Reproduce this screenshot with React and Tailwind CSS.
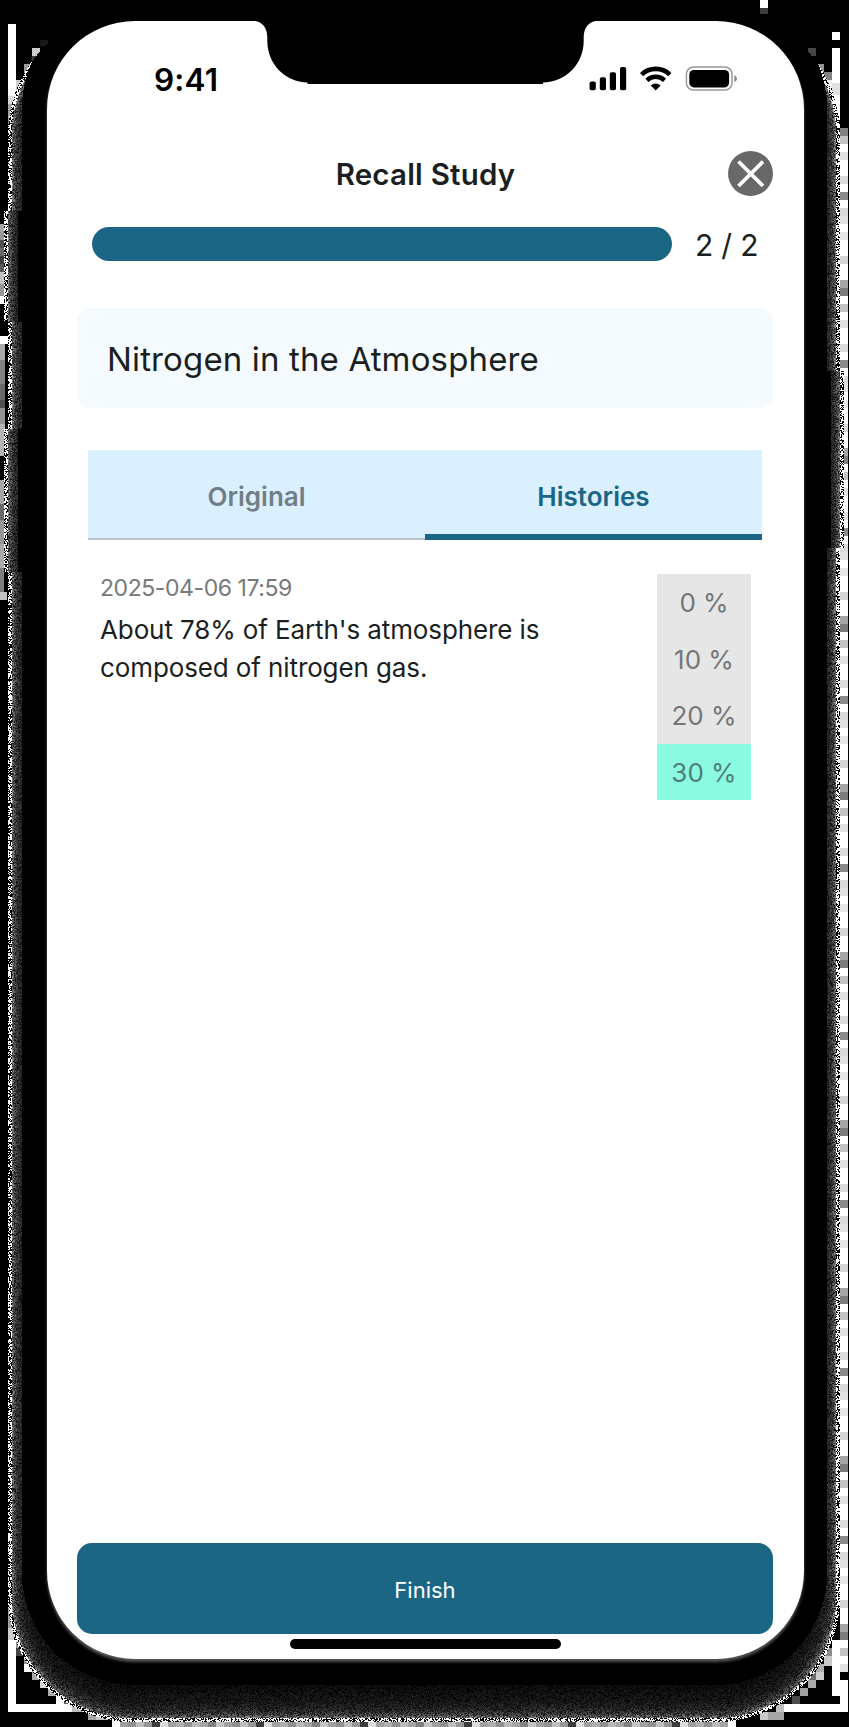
import React from "react";

// Smallest signed distance inside a rounded rectangle (positive = inside).
function inset(px, py, x0, y0, x1, y1, r) {
  const cx = (x0 + x1) / 2;
  const cy = (y0 + y1) / 2;
  const qx = Math.abs(px - cx) - (x1 - x0) / 2 + r;
  const qy = Math.abs(py - cy) - (y1 - y0) / 2 + r;
  const out = Math.hypot(Math.max(qx, 0), Math.max(qy, 0));
  return r - out - Math.min(Math.max(qx, qy), 0);
}

// Dithered drop shadow around the phone body, grouped by grey level.
function buildShadow() {
  let seed = 20250406;
  const rand = () => {
    seed = (Math.imul(seed, 1664525) + 1013904223) >>> 0;
    return seed / 4294967296;
  };
  const levels = {};
  for (let y = 40; y < 1723; y++) {
    const leftButton = (y > 210 && y < 322) || (y > 428 && y < 572);
    const rightButton = y > 370 && y < 548;
    for (let x = 4; x < 846; x++) {
      if (x > 140 && x < 708 && y < 1684) {
        x = 708;
        continue;
      }
      const sx = x < 420 && leftButton ? x + 4 : x > 420 && rightButton ? x - 4 : x;
      if (inset(sx + 0.5, y + 0.5, 22, -4, 827, 1685, 112) > 0) continue;
      const d = inset(sx + 0.5, y + 0.5, 8, 10, 840, 1722, 125);
      if (d <= 0) continue;
      let v;
      if (d < 3.6) v = rand() < 0.55 ? 255 : 0;
      else v = Math.min(255, (440 / d) * (0.25 + 1.5 * rand()));
      v = Math.round(v / 15) * 15;
      if (v < 8) {
        if (d < 3.6) v = 0;
        else continue;
      }
      levels[v] = (levels[v] || "") + `M${x} ${y}h1v1h-1z`;
    }
  }
  return Object.entries(levels);
}

const SHADOW = buildShadow();

// x, y, width, height, grey level
const BLOCKS = [
  [8, 24, 8, 72, 255], [8, 96, 8, 8, 215], [8, 104, 8, 16, 165], [8, 120, 4, 20, 130],
  [16, 80, 8, 16, 205], [24, 64, 8, 10, 155], [24, 74, 6, 6, 70], [32, 48, 8, 8, 205], [32, 56, 6, 8, 60], [40, 40, 8, 6, 25],
  [0, 224, 8, 8, 165], [0, 232, 6, 8, 150], [0, 240, 5, 8, 80], [0, 248, 5, 8, 105], [0, 256, 5, 8, 60], [0, 264, 5, 8, 90],
  [0, 272, 5, 12, 195], [0, 284, 5, 12, 150], [0, 296, 8, 8, 255], [0, 336, 8, 8, 255],
  [0, 344, 5, 16, 170], [0, 360, 5, 24, 130], [0, 384, 5, 16, 105], [0, 400, 5, 8, 80], [0, 408, 5, 16, 145], [0, 424, 5, 32, 180],
  [0, 480, 5, 24, 165], [0, 504, 5, 16, 105], [0, 520, 5, 24, 150], [0, 544, 5, 24, 170], [0, 568, 4, 24, 125], [0, 592, 7, 8, 195],
  [760, 0, 8, 8, 255], [760, 8, 8, 6, 60],
  [832, 32, 8, 8, 255], [832, 48, 8, 35, 255], [832, 83, 8, 12, 225], [832, 95, 8, 25, 255],
  [808, 48, 8, 8, 70], [816, 64, 8, 8, 150], [824, 72, 8, 8, 130], [824, 80, 8, 8, 240],
  [8, 1608, 4, 20, 160], [8, 1628, 6, 12, 205], [8, 1640, 8, 72, 255],
  [16, 1640, 5, 8, 150], [16, 1648, 8, 8, 70], [24, 1656, 6, 8, 150], [24, 1664, 8, 8, 255],
  [32, 1664, 8, 8, 130], [32, 1672, 8, 8, 170], [40, 1680, 8, 8, 215], [48, 1688, 8, 8, 175],
  [56, 1696, 8, 16, 255], [64, 1696, 8, 8, 100], [72, 1704, 16, 8, 190], [16, 1704, 56, 8, 255],
  [88, 1712, 8, 8, 165], [96, 1712, 16, 8, 195], [112, 1720, 8, 7, 255],
  [832, 1640, 8, 56, 255], [840, 1680, 8, 32, 255], [784, 1704, 56, 8, 255],
  [824, 1648, 8, 8, 140], [824, 1656, 8, 10, 200], [816, 1664, 8, 8, 175], [816, 1672, 8, 8, 205],
  [808, 1672, 8, 8, 110], [808, 1680, 8, 8, 170], [800, 1688, 8, 8, 160], [792, 1696, 8, 8, 75],
  [776, 1704, 8, 8, 190], [768, 1712, 16, 8, 165], [760, 1712, 8, 8, 200],
];

const EDGE_TONES = [255, 195, 255, 225, 255, 255, 220, 255, 140, 255, 218, 225, 255, 232, 255, 255, 215, 255, 255, 165, 125];
const FOOT_TONES = [160, 145, 190, 150, 60, 220, 160, 175, 145, 185, 165, 130, 195];

function Backdrop() {
  const side = [];
  for (let y = 128, i = 0; y < 1672; y += 8, i++) side.push([840, y, 8, 8, y < 136 ? 130 : EDGE_TONES[i % EDGE_TONES.length]]);
  const foot = [];
  for (let x = 120, i = 0; x < 728; x += 8, i++) foot.push([x, 1722, 8, 5, FOOT_TONES[i % FOOT_TONES.length]]);
  foot.push([728, 1720, 8, 7, 255]);
  return (
    <svg className="absolute inset-0" width="849" height="1727" shapeRendering="crispEdges" aria-hidden="true">
      <rect width="849" height="1727" fill="#000" />
      {[...BLOCKS, ...side, ...foot].map(([x, y, w, h, v], i) => (
        <rect key={i} x={x} y={y} width={w} height={h} fill={`rgb(${v},${v},${v})`} />
      ))}
      <rect x="8" y="10" width="832" height="1712" rx="125" fill="#000" />
      {SHADOW.map(([v, d]) => (
        <path key={v} d={d} fill={`rgb(${v},${v},${v})`} />
      ))}
    </svg>
  );
}

function StatusIcons() {
  return (
    <svg width="150" height="26" viewBox="588 66 150 26" aria-hidden="true">
      <rect x="589.6" y="81.5" width="6.2" height="8.8" rx="1.8" />
      <rect x="599.8" y="77.3" width="6.2" height="13" rx="1.8" />
      <rect x="609.8" y="72.2" width="6.2" height="18.1" rx="1.8" />
      <rect x="620" y="67" width="6.2" height="23.3" rx="1.8" />
      <g fill="none" stroke="#000">
        <path d="M641.6 74.6a20.2 20.2 0 0 1 28.2 0" strokeWidth="4.6" />
        <path d="M646.9 80.4a12.6 12.6 0 0 1 17.6 0" strokeWidth="4.4" />
      </g>
      <path d="M655.7 90.4l-5-5a7.4 7.4 0 0 1 10 0z" />
      <rect x="686.4" y="67.1" width="45.6" height="23" rx="7" fill="none" stroke="#999" strokeWidth="1.5" />
      <rect x="689.3" y="70" width="39.8" height="17.4" rx="4.6" />
      <path d="M734.3 75.3c3.4 1.2 3.4 5.6 0 6.8z" fill="#888" />
    </svg>
  );
}

const SCORES = [
  { label: "0 %", tone: "bg-[#e6e6e6] text-[#747778]" },
  { label: "10 %", tone: "bg-[#e6e6e6] text-[#747778]" },
  { label: "20 %", tone: "bg-[#e6e6e6] text-[#747778]" },
  { label: "30 %", tone: "bg-[#8afbe1] text-[#507e78]" },
];

export default function App() {
  return (
    <div className="relative h-[1727px] w-[849px] overflow-hidden bg-black px-[47px] pt-[21px] font-['Inter',sans-serif] text-[#1b1f21]">
      <Backdrop />
      <div className="relative flex h-[1638px] w-[757px] flex-col rounded-[88px] bg-white shadow-[0_3px_3px_#555]">
        <svg className="absolute top-0 left-[208px]" width="341" height="64" viewBox="255 21 341 64" aria-hidden="true">
          <path d="M255 21C262 21.500 267.300 28 267.300 37V41C267.300 64 285 82 307.500 82.500V84H543V82.500C566 82 583.700 64 583.700 41V37C583.700 28 589 21.500 596 21V20H255z" />
        </svg>

        <header className="flex h-[116px] items-start justify-between pt-[45px] pr-[66px] pl-[107px]">
          <span className="mt-[-5px] text-[31.500px] leading-[38px] font-semibold tracking-[0.200px] text-black">9:41</span>
          <StatusIcons />
        </header>

        <div className="flex h-[72px] items-center justify-end pr-[31px]">
          <h1 className="flex-1 pt-[2px] pl-[76px] text-center text-[29.500px] leading-[36px] font-semibold tracking-[0.200px]">Recall Study</h1>
          <button aria-label="Close" className="size-[45px]">
            <svg width="45" height="45" viewBox="0 0 45 45">
              <circle cx="22.500" cy="22.500" r="22.500" fill="#686868" />
              <path d="M10.500 10.500l24.500 24.500M35 10.500l-24.500 24.500" stroke="#fff" strokeWidth="3.800" />
            </svg>
          </button>
        </div>

        <div className="mt-[18px] ml-[45px] flex h-[34px] items-center gap-[23px]">
          <div className="h-[34px] w-[580px] rounded-full bg-[#1c6685]" />
          <span className="pt-px text-[30px] leading-[34px] tracking-[-0.200px] whitespace-nowrap">2 / 2</span>
        </div>

        <div className="mt-[47px] ml-[30px] flex h-[100px] w-[696px] items-center rounded-[14px] bg-[#f5fafe] pl-[30px]">
          <h2 className="pt-px text-[33px] leading-[40px] tracking-[0.140px]">Nitrogen in the Atmosphere</h2>
        </div>

        <div className="mt-[42px] ml-[41px] flex h-[90px] w-[674px] bg-[#daf0fe] text-[26px] font-semibold">
          <button className="flex-1 border-b-2 border-[#b9c5cb] pt-[5px] text-[#727e86]">Original</button>
          <button className="flex-1 border-b-[6px] border-[#1c6685] pt-[9px] text-[#1c6685]">Histories</button>
        </div>

        <div className="mt-[34px] ml-[53px] flex w-[651px] justify-between">
          <div>
            <p className="text-[23px] leading-[28px] tracking-[-0.430px] text-[#76797a]">2025-04-06 17:59</p>
            <p className="mt-[9px] w-[460px] text-[26px] leading-[37.500px] tracking-[-0.110px]">About 78% of Earth's atmosphere is composed of nitrogen gas.</p>
          </div>
          <ul className="w-[94px] text-[26px]">
            {SCORES.map((s) => (
              <li key={s.label} className={"flex h-[56.500px] items-center justify-center pt-px " + s.tone}>
                {s.label}
              </li>
            ))}
          </ul>
        </div>

        <div className="mt-auto flex flex-col items-center pr-px pb-[10px]">
          <button className="h-[91px] w-[696px] rounded-[15px] bg-[#1c6685] pt-[4px] text-[22px] text-white">Finish</button>
          <div className="mt-[5px] h-[10px] w-[271px] rounded-full bg-black" />
        </div>
      </div>
    </div>
  );
}
